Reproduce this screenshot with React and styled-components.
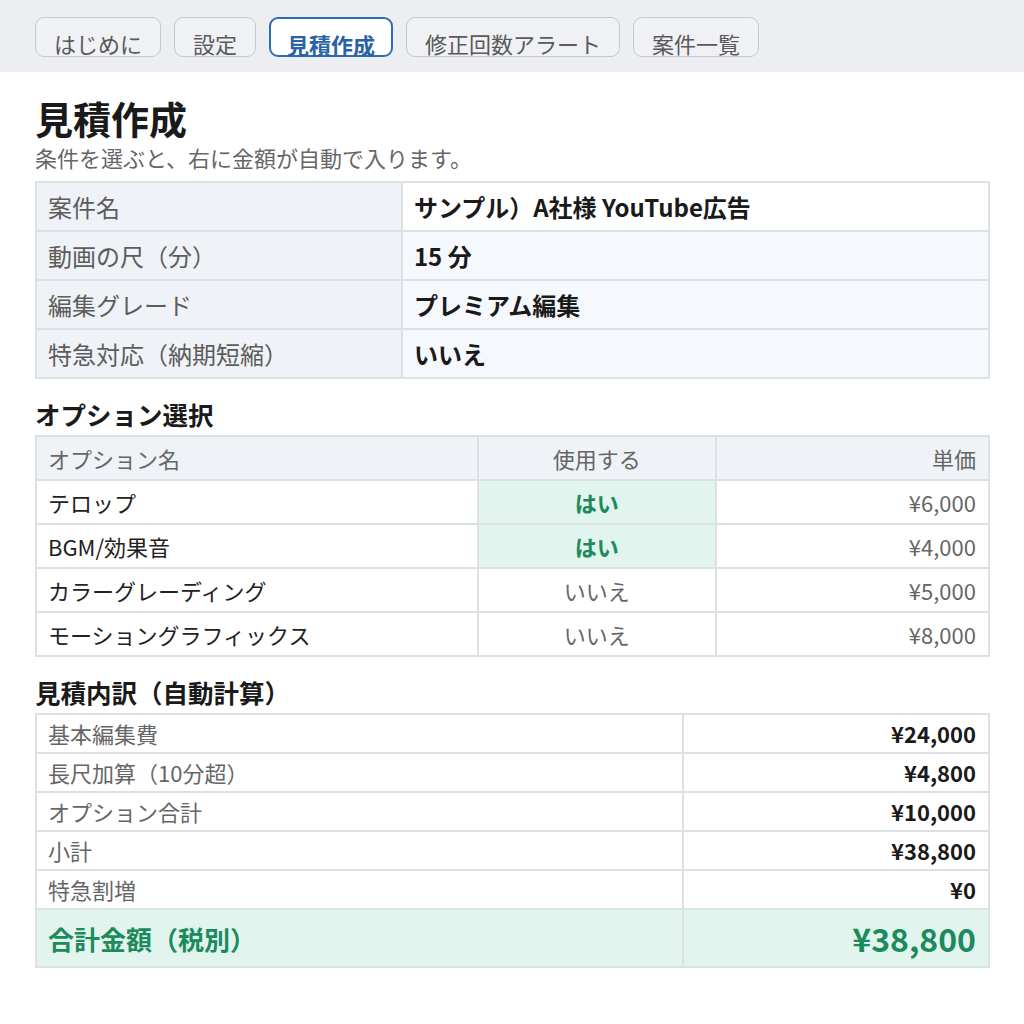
import React from 'react'
import styled, { createGlobalStyle } from 'styled-components'

const tabs = ['はじめに', '設定', '見積作成', '修正回数アラート', '案件一覧']

const basics = [
  { label: '案件名', value: 'サンプル）A社様 YouTube広告' },
  { label: '動画の尺（分）', value: '15 分', tint: true },
  { label: '編集グレード', value: 'プレミアム編集', tint: true },
  { label: '特急対応（納期短縮）', value: 'いいえ', tint: true },
]

const options = [
  { name: 'テロップ', used: true, price: '¥6,000' },
  { name: 'BGM/効果音', used: true, price: '¥4,000' },
  { name: 'カラーグレーディング', used: false, price: '¥5,000' },
  { name: 'モーショングラフィックス', used: false, price: '¥8,000' },
]

const breakdown = [
  { label: '基本編集費', value: '¥24,000' },
  { label: '長尺加算（10分超）', value: '¥4,800' },
  { label: 'オプション合計', value: '¥10,000' },
  { label: '小計', value: '¥38,800' },
  { label: '特急割増', value: '¥0' },
]

export default function App() {
  return (
    <>
      <GlobalStyle />
      <TabBar>
        {tabs.map((t) => (
          <Tab key={t} $active={t === '見積作成'}>{t}</Tab>
        ))}
      </TabBar>
      <Page>
        <Title>見積作成</Title>
        <Lead>条件を選ぶと、右に金額が自動で入ります。</Lead>

        <Table>
          <colgroup>
            <col style={{ width: '38.4%' }} />
            <col />
          </colgroup>
          <tbody>
            {basics.map((r) => (
              <tr key={r.label}>
                <InfoLabel>{r.label}</InfoLabel>
                <InfoValue $tint={r.tint}>{r.value}</InfoValue>
              </tr>
            ))}
          </tbody>
        </Table>

        <Section>オプション選択</Section>
        <Table>
          <colgroup>
            <col style={{ width: '46.4%' }} />
            <col style={{ width: '25%' }} />
            <col />
          </colgroup>
          <thead>
            <tr>
              <HeadCell>オプション名</HeadCell>
              <HeadCell $align="center">使用する</HeadCell>
              <HeadCell $align="right">単価</HeadCell>
            </tr>
          </thead>
          <tbody>
            {options.map((o) => (
              <tr key={o.name}>
                <OptCell>{o.name}</OptCell>
                <UseCell $on={o.used}>{o.used ? 'はい' : 'いいえ'}</UseCell>
                <PriceCell>{o.price}</PriceCell>
              </tr>
            ))}
          </tbody>
        </Table>

        <Section>見積内訳（自動計算）</Section>
        <Table>
          <colgroup>
            <col style={{ width: '67.9%' }} />
            <col />
          </colgroup>
          <tbody>
            {breakdown.map((b) => (
              <tr key={b.label}>
                <SumLabel>{b.label}</SumLabel>
                <SumValue>{b.value}</SumValue>
              </tr>
            ))}
            <tr>
              <TotalLabel>合計金額（税別）</TotalLabel>
              <TotalValue>¥38,800</TotalValue>
            </tr>
          </tbody>
        </Table>
      </Page>
    </>
  )
}

const GlobalStyle = createGlobalStyle`
  body {
    margin: 0;
    background: #fff;
    font-family: "Noto Sans CJK JP", "Noto Sans", sans-serif;
    color: #1d1d1f;
  }
`

const TabBar = styled.div`
  display: flex;
  align-items: flex-start;
  gap: 13px;
  height: 72px;
  box-sizing: border-box;
  padding: 17px 35px 0;
  background: #eceef1;
`

const Tab = styled.div`
  height: 40px;
  box-sizing: border-box;
  padding: ${(p) => (p.$active ? '12.5px 16px 0' : '13px 18px 0')};
  border: ${(p) => (p.$active ? '2px solid #2e6cb3' : '1.5px solid #c5c9ce')};
  border-radius: 9px;
  background: ${(p) => (p.$active ? '#fff' : '#eff1f4')};
  color: ${(p) => (p.$active ? '#2a62a6' : '#5a5a5a')};
  font-size: 22px;
  font-weight: ${(p) => (p.$active ? 700 : 400)};
  line-height: 24px;
  white-space: nowrap;
`

const Page = styled.div`
  padding: 23px 34px 40px 35px;
`

const Title = styled.h1`
  margin: 0;
  font-size: 38px;
  font-weight: 700;
  line-height: 46px;
  color: #1a1a1a;
`

const Lead = styled.p`
  margin: 0 0 8px;
  font-size: 22px;
  line-height: 32px;
  color: #666;
`

const Section = styled.h2`
  margin: 18px 0 4px;
  font-size: 25.5px;
  font-weight: 700;
  line-height: 34px;
  color: #1a1a1a;
`

const Table = styled.table`
  width: 100%;
  border-collapse: collapse;
  table-layout: fixed;
  font-size: 22px;
  line-height: 31px;

  td, th {
    border: 2px solid #dde1e6;
    padding: 0 12px 0 11px;
    overflow: hidden;
    white-space: nowrap;
  }
`

const InfoLabel = styled.td`
  height: 47px;
  background: #eff2f6;
  color: #5c5c5c;
  font-size: 24px;
`

const InfoValue = styled.td`
  background: ${(p) => (p.$tint ? '#f5f8fc' : '#fff')};
  font-size: 24px;
  font-weight: 700;
  color: #1a1a1a;
`

const HeadCell = styled.th`
  height: 42px;
  background: #eff2f6;
  color: #666;
  font-weight: 400;
  text-align: ${(p) => p.$align || 'left'};
`

const OptCell = styled.td`
  height: 42px;
  color: #222;
`

const UseCell = styled.td`
  text-align: center;
  background: ${(p) => (p.$on ? '#e1f4ed' : '#fff')};
  color: ${(p) => (p.$on ? '#1b8a5c' : '#666')};
  font-weight: ${(p) => (p.$on ? 700 : 400)};
`

const PriceCell = styled.td`
  text-align: right;
  color: #666;
`

const SumLabel = styled.td`
  height: 37px;
  color: #666;
`

const SumValue = styled.td`
  text-align: right;
  font-weight: 700;
  color: #1a1a1a;
`

const TotalLabel = styled.td`
  height: 56px;
  background: #e1f4ed;
  color: #1b8a5c;
  font-size: 26px;
  font-weight: 700;
`

const TotalValue = styled.td`
  background: #e1f4ed;
  text-align: right;
  color: #1b8a5c;
  font-size: 32px;
  font-weight: 700;
`
